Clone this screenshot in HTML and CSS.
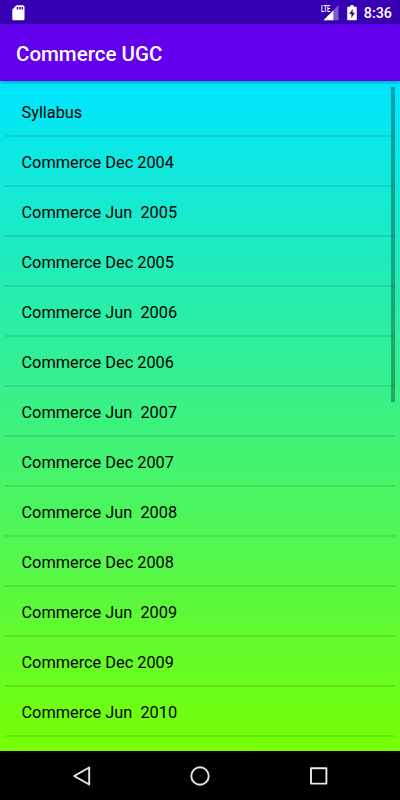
FILE: index.html
```html
<!DOCTYPE html>
<html lang="en">
<head>
<meta charset="utf-8">
<title>Commerce UGC</title>
<link rel="stylesheet" href="styles.css">
</head>
<body>
<div class="status">
  <svg class="sd" width="13" height="16" viewBox="0 0 13 16"><path fill="#fff" fill-rule="evenodd" d="M4.400.3H11a1.500 1.500 0 0 1 1.500 1.500v12A1.500 1.500 0 0 1 11 15.300H1.800A1.500 1.500 0 0 1 .3 13.800V4.500zM4.700 2v2.600h1.500V2zM7.200 2v2.600h1.500V2zM9.600 2v2.600H11V2z"/></svg>
  <div class="signal">
    <span class="lte">LTE</span>
    <svg width="19" height="16" viewBox="0 0 19 16"><path fill="#fff" fill-opacity=".35" d="M18.500 0v15.300H3.500L13.300 5.500z"/><path fill="#fff" d="M13.300 5.500v9.800H3.500z"/></svg>
  </div>
  <svg class="battery" width="10" height="16" viewBox="0 0 10 16"><path fill="#fff" fill-rule="evenodd" d="M3.200.2h3.600v1.500H9a.8.8 0 0 1 .8.8v12a.8.8 0 0 1-.8.8H1a.8.8 0 0 1-.8-.8v-12A.8.8 0 0 1 1 1.700h2.200zM5.700 4L2.200 9.100h2.200V13l3.500-5.200H5.700z"/></svg>
  <span class="time">8:36</span>
</div>
<header class="appbar">Commerce UGC</header>
<main class="content">
  <ul class="list">
    <li>Syllabus</li>
    <li>Commerce Dec 2004</li>
    <li>Commerce Jun  2005</li>
    <li>Commerce Dec 2005</li>
    <li>Commerce Jun  2006</li>
    <li>Commerce Dec 2006</li>
    <li>Commerce Jun  2007</li>
    <li>Commerce Dec 2007</li>
    <li>Commerce Jun  2008</li>
    <li>Commerce Dec 2008</li>
    <li>Commerce Jun  2009</li>
    <li>Commerce Dec 2009</li>
    <li>Commerce Jun  2010</li>
  </ul>
  <div class="scrollbar"></div>
</main>
<nav class="navbar">
  <svg width="20" height="20" viewBox="0 0 20 20"><path d="M17.200 1.500v17L2.200 10z"/></svg>
  <svg width="20" height="20" viewBox="0 0 20 20"><circle cx="10" cy="10" r="8.700"/></svg>
  <svg width="20" height="20" viewBox="0 0 20 20"><rect x="2" y="2.200" width="15.400" height="15.400"/></svg>
</nav>
</body>
</html>
```

FILE: styles.css
```css
* { box-sizing: border-box; }
body {
  margin: 0;
  height: 800px;
  overflow: hidden;
  display: flex;
  flex-direction: column;
  font-family: Roboto, sans-serif;
}
.status {
  flex: 0 0 24px;
  display: flex;
  align-items: flex-start;
  padding: 5px 8px 0 12px;
  background: #3700b3;
  color: #fff;
}
.signal {
  position: relative;
  width: 19px;
  height: 16px;
  margin-left: auto;
}
.lte {
  position: absolute;
  left: 1px;
  top: 0;
  font-size: 9px;
  line-height: 9px;
  font-weight: 700;
  transform: scaleX(.63);
  transform-origin: left;
}
.battery { margin: 0 7px 0 8px; }
.time {
  font-size: 14.300px;
  line-height: 16px;
  font-weight: 500;
}
.appbar {
  flex: 0 0 57px;
  height: 57px;
  min-height: 0;
  padding-left: 16px;
  background: #6200ee;
  color: #fff;
  font-size: 20.500px;
  line-height: 61px;
  font-weight: 500;
  z-index: 1;
  box-shadow: 0 1px 4px rgba(0, 0, 0, .35);
}
.content {
  position: relative;
  flex: 0 0 670px;
  padding: 6px 5px 0;
  background: linear-gradient(#00e5ff, #76ff03);
}
.list {
  margin: 0;
  padding: 0;
  list-style: none;
}
.list li {
  height: 50px;
  padding-left: 16.500px;
  border-bottom: 2px solid rgba(0, 0, 0, .09);
  color: #000;
  font-size: 16.320px;
  line-height: 51px;
  white-space: pre;
}
.scrollbar {
  position: absolute;
  top: 6px;
  right: 5px;
  width: 4px;
  height: 315px;
  background: rgba(0, 0, 0, .3);
}
.navbar {
  flex: 0 0 49px;
  display: flex;
  justify-content: center;
  align-items: center;
  gap: 98.500px;
  background: #000;
}
.navbar svg {
  fill: none;
  stroke: #e8e8e8;
  stroke-width: 1.900;
  stroke-linejoin: round;
}
```
